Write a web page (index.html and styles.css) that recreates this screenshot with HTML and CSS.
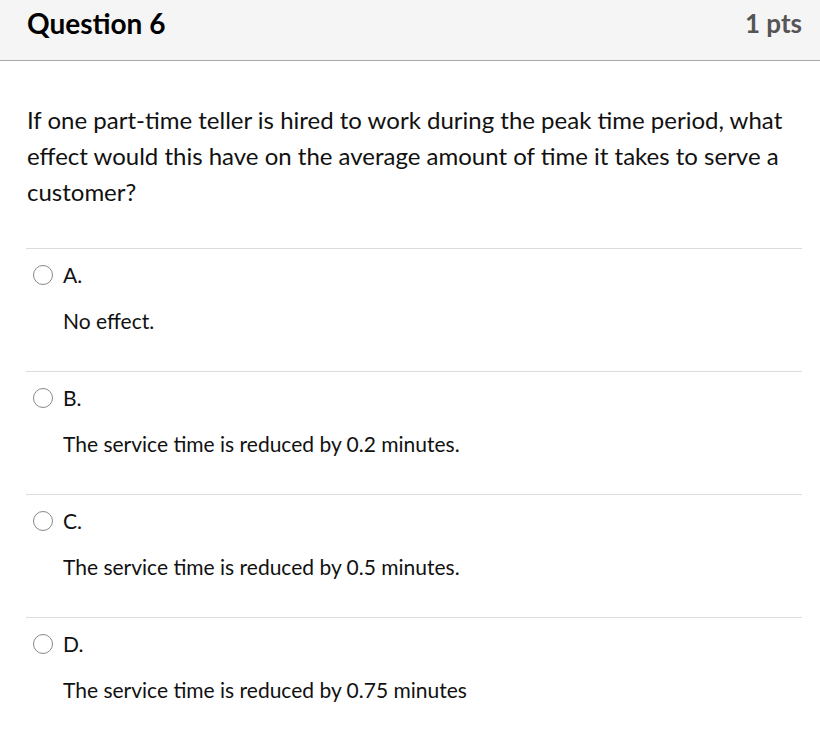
FILE: index.html
```html
<!DOCTYPE html>
<html lang="en">
<head>
<meta charset="utf-8">
<title>Question 6</title>
<link rel="stylesheet" href="styles.css">
</head>
<body>
<div class="question">
  <div class="header">
    <h2 class="title">Question 6</h2>
    <span class="pts">1 pts</span>
  </div>
  <div class="content">
    <p class="text">If one part-time teller is hired to work during the peak time period, what effect would this have on the average amount of time it takes to serve a customer?</p>
    <div class="answers">
      <div class="answer">
        <label class="choice"><span class="radio"></span><span class="letter">A.</span></label>
        <div class="answer-text">No effect.</div>
      </div>
      <div class="answer">
        <label class="choice"><span class="radio"></span><span class="letter">B.</span></label>
        <div class="answer-text">The service time is reduced by 0.2 minutes.</div>
      </div>
      <div class="answer">
        <label class="choice"><span class="radio"></span><span class="letter">C.</span></label>
        <div class="answer-text">The service time is reduced by 0.5 minutes.</div>
      </div>
      <div class="answer">
        <label class="choice"><span class="radio"></span><span class="letter">D.</span></label>
        <div class="answer-text">The service time is reduced by 0.75 minutes</div>
      </div>
    </div>
  </div>
</div>
</body>
</html>
```
FILE: styles.css
```css
html, body {
  margin: 0;
  padding: 0;
  background: #fff;
}
body {
  font-family: Lato, "Open Sans", sans-serif;
  color: #111;
}
.header {
  display: flex;
  align-items: flex-start;
  justify-content: space-between;
  height: 61px;
  box-sizing: border-box;
  padding: 6px 18px 0 27px;
  background: #f5f5f5;
  border-bottom: 1px solid #aaaaaa;
}
.title {
  margin: 0;
  font-size: 28px;
  line-height: 34px;
  font-weight: 700;
  color: #000;
}
.pts {
  font-size: 26px;
  line-height: 34px;
  font-weight: 700;
  color: #555;
}
.content {
  padding: 0 18px 0 26px;
}
.text {
  margin: 41px 0 38px 1px;
  font-size: 24px;
  line-height: 36px;
}
.answer {
  border-top: 1px solid #dcdcdc;
  padding: 11px 0 36px 0;
}
.choice {
  display: flex;
  align-items: center;
  height: 28px;
  font-size: 21px;
}
.radio {
  box-sizing: border-box;
  width: 20px;
  height: 20px;
  border: 1.5px solid #888;
  border-radius: 50%;
  margin: 0 10px 0 7px;
  position: relative;
  top: 1px;
}
.answer-text {
  margin-top: 19px;
  padding-left: 37px;
  font-size: 21px;
  line-height: 28px;
}
```
